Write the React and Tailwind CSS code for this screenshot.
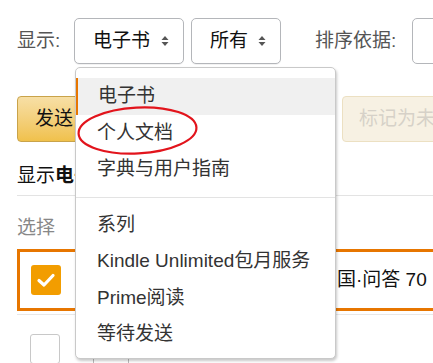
const font = { fontFamily: '"Liberation Sans", "Noto Sans CJK SC", sans-serif' }

function SortArrows() {
  return (
    <svg width="8" height="12" viewBox="0 0 8 12" aria-hidden="true" className="shrink-0">
      <path d="M4 1 L7.5 5 H0.5 Z" fill="#555" />
      <path d="M4 11 L7.5 7 H0.5 Z" fill="#555" />
    </svg>
  )
}

function Select({ label, width }) {
  return (
    <div
      className={`flex h-[46px] shrink-0 items-center justify-between rounded-[5px] border border-[#b4b6ba] bg-white pl-[18px] pr-[14px] text-[19px] text-[#111] shadow-[0_1px_0_rgba(0,0,0,0.05)] ${width}`}
    >
      <span>{label}</span>
      <SortArrows />
    </div>
  )
}

const menuItems = ['个人文档', '字典与用户指南']
const menuItems2 = ['系列', 'Kindle Unlimited包月服务', 'Prime阅读', '等待发送']

function Menu() {
  return (
    <div className="absolute left-[75px] top-[67px] w-[261px] rounded-[5px] border border-[#c9c9c9] bg-white pb-[5px] pt-[10px] text-[19px] text-[#333] shadow-[1px_2px_3px_rgba(0,0,0,0.22)]">
      <div className="flex h-[36.5px] items-center border-l-2 border-[#e77600] bg-[#f0f0f0] pl-[20px]">电子书</div>
      {menuItems.map((item) => (
        <div key={item} className="flex h-[36.5px] items-center pl-[21px]">
          {item}
        </div>
      ))}
      <div className="my-[9px] h-px bg-[#e3e3e3]" />
      {menuItems2.map((item) => (
        <div key={item} className="flex h-[36.5px] items-center pl-[21px]">
          {item}
        </div>
      ))}
    </div>
  )
}

export default function App() {
  return (
    <div className="relative h-[363px] w-[433px] overflow-hidden whitespace-nowrap bg-white" style={font}>
      <div className="pl-[17px]">
        {/* filters */}
        <div className="flex items-center pt-[18px]">
          <span className="w-[57px] shrink-0 text-[19px] text-[#555]">显示:</span>
          <Select label="电子书" width="w-[110px]" />
          <div className="w-[7px] shrink-0" />
          <Select label="所有" width="w-[90px]" />
          <span className="ml-[34px] w-[97px] shrink-0 text-[19px] text-[#555]">排序依据:</span>
          <div className="h-[46px] w-[80px] shrink-0 rounded-[5px] border border-[#b4b6ba] bg-white" />
        </div>

        {/* actions */}
        <div className="mt-[32px] flex items-center">
          <button
            type="button"
            className="flex h-[46px] w-[180px] shrink-0 items-center rounded-[4px] border border-[#c9a34a] bg-gradient-to-b from-[#f7dfa5] to-[#f0c14b] pl-[17px] text-[19px] text-[#111]"
          >
            发送
          </button>
          <button
            type="button"
            className="ml-[145px] flex h-[46px] w-[140px] shrink-0 items-center rounded-[4px] border border-[#ece0c2] bg-[#f7f1e3] pl-[16px] text-[19px] text-[#d6d1c8]"
          >
            标记为未读
          </button>
        </div>

        <div className="mt-[20px] text-[19px] text-[#111]">
          显示<span className="font-bold">电子书</span>
        </div>
        <div className="mt-[4px] h-px bg-[#e3e3e3]" />

        <div className="mt-[18px] text-[19px] text-[#888]">选择</div>

        <div className="mt-[7px] mr-[-40px] flex h-[62px] items-center border-[3px] border-[#e77600] pl-[11px]">
          <div className="grid h-[30px] w-[30px] shrink-0 place-items-center rounded-[3px] bg-[#f29d00]">
            <svg width="20" height="16" viewBox="0 0 20 16" aria-hidden="true">
              <path d="M3 8.5 L8 13 L17 3.5" fill="none" stroke="#fff" strokeWidth="3.2" strokeLinecap="round" strokeLinejoin="round" />
            </svg>
          </div>
          <span className="ml-[257px] shrink-0 text-[19px] text-[#111]">中国·问答 70</span>
        </div>
        <div className="mt-[3px] h-px bg-[#e8e8e8]" />

        <div className="mt-[19px] flex items-start">
          <div className="ml-[13px] h-[30px] w-[30px] shrink-0 rounded-[3px] border border-[#c8c8c8] bg-white" />
          <div className="ml-[33px] mt-[22px] h-[20px] w-[36px] shrink-0 border border-[#bbb]" />
        </div>
      </div>

      <Menu />

      <svg
        className="pointer-events-none absolute left-[74px] top-[104px]"
        width="128"
        height="54"
        viewBox="0 0 128 54"
        aria-hidden="true"
      >
        <ellipse cx="63.5" cy="26.5" rx="59" ry="23" fill="none" stroke="#e2141c" strokeWidth="2.2" transform="rotate(-3 63.5 26.5)" />
      </svg>
    </div>
  )
}
